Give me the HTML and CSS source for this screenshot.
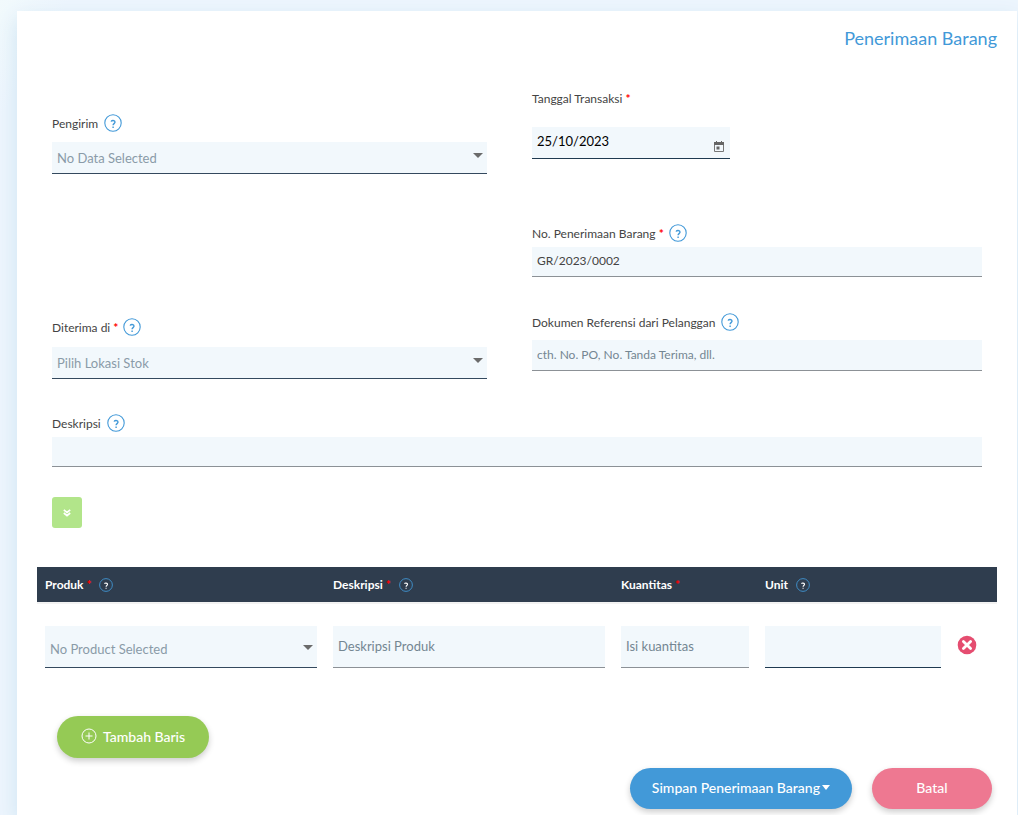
FILE: index.html
```html
<!DOCTYPE html>
<html lang="id">
<head>
    <meta charset="UTF-8">
    <meta name="viewport" content="width=device-width, initial-scale=1.0">
    <title>Penerimaan Barang</title>
    <link rel="stylesheet" href="styles.css">
</head>
<body>
    <svg class="defs" width="0" height="0">
        <symbol id="caret" viewBox="0 0 10 5"><path d="M0 0h10L5 5z" fill="currentColor"/></symbol>
        <symbol id="help" viewBox="0 0 18 18">
            <circle cx="9" cy="9" r="8.2" fill="none" stroke="#4299d8" stroke-width="1.1"/>
            <path d="M7.2 7.6C7.4 6 11 6.2 11 8.1C11 9.6 9.1 9.6 9.1 11.2M9.1 12.4v1.5" fill="none" stroke="currentColor" stroke-width="1.4"/>
        </symbol>
    </svg>

    <form class="card">
        <h1>Penerimaan Barang</h1>

        <div class="columns">
            <div class="column column-left">
                <div class="field field-sender">
                    <div class="field-label">
                        <label for="sender">Pengirim</label>
                        <svg class="help"><use href="#help"/></svg>
                    </div>
                    <div class="select">
                        <select id="sender"><option>No Data Selected</option></select>
                        <svg class="caret"><use href="#caret"/></svg>
                    </div>
                </div>
                <div class="field field-location">
                    <div class="field-label">
                        <label for="location">Diterima di <span class="required">*</span></label>
                        <svg class="help help-near"><use href="#help"/></svg>
                    </div>
                    <div class="select">
                        <select id="location"><option>Pilih Lokasi Stok</option></select>
                        <svg class="caret"><use href="#caret"/></svg>
                    </div>
                </div>
            </div>

            <div class="column">
                <div class="field field-date">
                    <div class="field-label">
                        <label for="date">Tanggal Transaksi <span class="required">*</span></label>
                    </div>
                    <div class="date">
                        <input type="text" id="date" value="25/10/2023">
                        <button type="button" class="date-button" aria-label="Pilih tanggal">
                            <svg width="10" height="11" viewBox="0 0 10 11">
                                <path d="M.5 2h9v8.5h-9z" fill="none" stroke="#777"/>
                                <path d="M0 1h10v3H0zM2 0h1v2H2zM7 0h1v2H7zM2.5 5.5h3v3h-3z" fill="#666"/>
                            </svg>
                        </button>
                    </div>
                </div>
                <div class="field field-number">
                    <div class="field-label">
                        <label for="number">No. Penerimaan Barang <span class="required">*</span></label>
                        <svg class="help help-near"><use href="#help"/></svg>
                    </div>
                    <input type="text" id="number" value="GR/2023/0002">
                </div>
                <div class="field field-reference">
                    <div class="field-label">
                        <label for="reference">Dokumen Referensi dari Pelanggan</label>
                        <svg class="help help-near"><use href="#help"/></svg>
                    </div>
                    <input type="text" id="reference" placeholder="cth. No. PO, No. Tanda Terima, dll.">
                </div>
            </div>
        </div>

        <div class="description">
            <div class="field-label">
                <label for="description">Deskripsi</label>
                <svg class="help"><use href="#help"/></svg>
            </div>
            <input type="text" id="description">
            <button type="button" class="expand" aria-label="Lainnya">
                <svg width="8" height="8" viewBox="0 0 8 8" fill="none" stroke="#fff" stroke-width="1.7">
                    <path d="M.8 .8L4 3.4 7.2 .8M.8 4L4 6.6 7.2 4"/>
                </svg>
            </button>
        </div>

        <table>
            <thead>
                <tr>
                    <th class="wide">Produk <span class="required">*</span> <svg class="help"><use href="#help"/></svg></th>
                    <th class="wide">Deskripsi <span class="required">*</span> <svg class="help"><use href="#help"/></svg></th>
                    <th class="quantity">Kuantitas <span class="required">*</span></th>
                    <th class="unit">Unit <svg class="help"><use href="#help"/></svg></th>
                    <th class="remove"></th>
                </tr>
            </thead>
            <tbody>
                <tr>
                    <td>
                        <div class="select">
                            <select aria-label="Produk"><option>No Product Selected</option></select>
                            <svg class="caret"><use href="#caret"/></svg>
                        </div>
                    </td>
                    <td><input type="text" placeholder="Deskripsi Produk" aria-label="Deskripsi"></td>
                    <td><input type="text" placeholder="Isi kuantitas" aria-label="Kuantitas"></td>
                    <td><input type="text" class="unit-input" aria-label="Unit" disabled></td>
                    <td>
                        <button type="button" class="remove-button" aria-label="Hapus">
                            <svg width="20" height="20" viewBox="0 0 20 20">
                                <circle cx="10" cy="10" r="9.3" fill="#e54d70"/>
                                <path d="M6.4 6.4l7.2 7.2M13.6 6.4l-7.2 7.2" stroke="#fff" stroke-width="2.8" stroke-linecap="round"/>
                            </svg>
                        </button>
                    </td>
                </tr>
            </tbody>
        </table>

        <button type="button" class="button button-add">
            <svg width="16" height="16" viewBox="0 0 16 16" fill="none" stroke="#fff">
                <circle cx="8" cy="8" r="7"/>
                <path d="M8 4.5v7M4.5 8h7"/>
            </svg>
            Tambah Baris
        </button>

        <div class="actions">
            <button type="button" class="button button-save">
                Simpan Penerimaan Barang
                <svg width="8" height="5" viewBox="0 0 8 5"><path d="M0 0h8L4 5z" fill="#fff"/></svg>
            </button>
            <button type="button" class="button button-cancel">Batal</button>
        </div>
    </form>
</body>
</html>
```
FILE: styles.css
```css
* {
    box-sizing: border-box;
}
body {
    margin: 0;
    padding: 11px 1px 0 17px;
    min-height: 100vh;
    display: flex;
    font-family: Lato, sans-serif;
    font-size: 12px;
    color: #444;
    background: linear-gradient(120deg, #f2fafc, #edf5fd 60px);
}
.defs {
    position: absolute;
}
.card {
    flex: 1;
    padding: 15px 20px 6px;
    background-color: #fff;
    box-shadow: 0 8px 20px #cde4f2;
}
h1 {
    margin: 0 0 52px;
    font-size: 18px;
    line-height: 24px;
    font-weight: normal;
    text-align: right;
    color: #4299d8;
}
.columns {
    display: grid;
    grid-template-columns: 1fr 1fr;
}
.column {
    padding: 0 15px;
}
.column-left {
    padding-right: 30px;
}
.field-label {
    display: flex;
    align-items: center;
    height: 18px;
    margin-bottom: 10px;
}
.required {
    font-weight: bold;
    color: #f00;
}
.help {
    width: 18px;
    height: 18px;
    margin-left: 6px;
    color: #4299d8;
}
.help-near {
    margin-left: 5px;
}
.field-sender {
    margin: 12px 0 144px;
}
.field-location .field-label {
    margin-bottom: 11px;
}
.field-date .field-label {
    margin: -13px 0 20px;
}
.field-number {
    margin: 65px 0 36px;
}
.field-number .field-label,
.description .field-label {
    margin-bottom: 5px;
}
.field-reference .field-label {
    margin-bottom: 9px;
}

input,
select {
    display: block;
    width: 100%;
    height: 30px;
    padding: 0 5px 2px;
    border: none;
    border-bottom: 1px solid #8c9196;
    border-radius: 0;
    outline: none;
    background-color: #f2f8fc;
    font-family: inherit;
    font-size: 12px;
    color: #444;
}
input::placeholder {
    color: #748692;
}
.field-reference input {
    height: 31px;
}
.select {
    position: relative;
}
select {
    appearance: none;
    height: 32px;
    padding-bottom: 0;
    border-bottom-color: #34495e;
    font-size: 13px;
    color: #8a9ba8;
}
.caret {
    position: absolute;
    top: 11px;
    right: 4px;
    width: 10px;
    height: 5px;
    color: #6b6b6b;
    pointer-events: none;
}
.date {
    position: relative;
    width: 198px;
}
.date input {
    height: 32px;
    padding-bottom: 3px;
    border-bottom-color: #1f3a50;
    font-size: 13px;
    color: #000;
}
.date-button {
    position: absolute;
    right: 6px;
    bottom: 7px;
    display: flex;
    padding: 0;
    border: none;
    background: none;
}
.description {
    padding: 35px 15px 39px;
}
.expand {
    display: flex;
    align-items: center;
    justify-content: center;
    width: 30px;
    height: 31px;
    margin-top: 30px;
    padding: 0;
    border: none;
    border-radius: 3px;
    background-color: #b2e58a;
}

table {
    width: 100%;
    table-layout: fixed;
    border-collapse: collapse;
}
th {
    height: 35px;
    padding: 0 8px;
    text-align: left;
    color: #fff;
    background-color: #2f3d4e;
}
thead {
    box-shadow: 0 2px #f2f2f2;
}
th .help {
    width: 14px;
    height: 14px;
    margin-left: 5px;
    vertical-align: middle;
    color: #fff;
}
.wide {
    width: 30%;
}
.quantity {
    width: 15%;
}
.unit {
    width: 20%;
}
td {
    padding: 24px 8px 0;
}
td input,
td select {
    height: 42px;
    font-size: 13px;
}
td select {
    padding-top: 5px;
}
td .caret {
    top: 19px;
}
td .unit-input {
    border-bottom: 1px solid #1f3a50;
}
.remove-button {
    display: flex;
    margin-bottom: 4px;
    padding: 0;
    border: none;
    background: none;
}

.button {
    display: flex;
    align-items: center;
    justify-content: center;
    gap: 6px;
    height: 41px;
    padding: 0 22px 2px;
    border: none;
    border-radius: 21px;
    box-shadow: 0 3px 6px rgba(0, 0, 0, 0.2);
    font-family: inherit;
    font-size: 14px;
    font-weight: 500;
    color: #fff;
    cursor: pointer;
}
.button-add {
    height: 42px;
    margin: 48px 20px 10px;
    padding: 0 24px 2px;
    background-color: #95ca55;
}
.actions {
    display: flex;
    justify-content: flex-end;
    gap: 20px;
    padding-right: 5px;
}
.button-save {
    gap: 2px;
    background-color: #4299d8;
}
.button-cancel {
    width: 120px;
    background-color: #ee7891;
}
```
